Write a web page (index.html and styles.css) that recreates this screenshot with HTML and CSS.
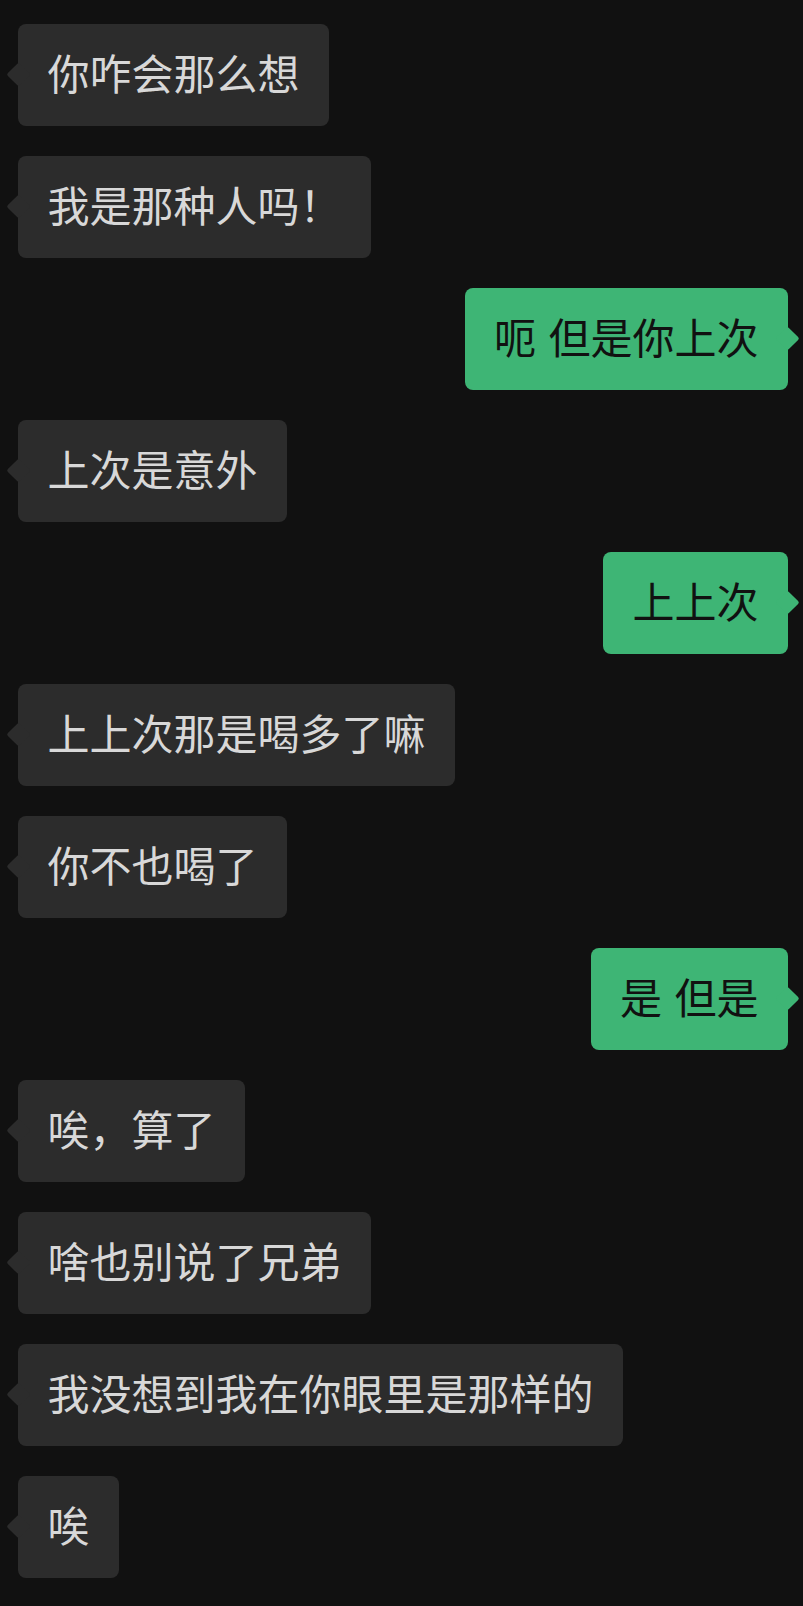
FILE: index.html
```html
<!DOCTYPE html>
<html lang="zh-CN">
<head>
    <meta charset="UTF-8">
    <meta name="viewport" content="width=device-width, initial-scale=1.0">
    <title>聊天</title>
    <link rel="stylesheet" href="styles.css">
</head>
<body>
    <div class="chat">
        <!-- each row is one message, .in = theirs, .out = mine -->
        <div class="row in"><div class="bubble">你咋会那么想</div></div>
        <div class="row in"><div class="bubble">我是那种人吗！</div></div>
        <div class="row out"><div class="bubble">呃 但是你上次</div></div>
        <div class="row in"><div class="bubble">上次是意外</div></div>
        <div class="row out"><div class="bubble">上上次</div></div>
        <div class="row in"><div class="bubble">上上次那是喝多了嘛</div></div>
        <div class="row in"><div class="bubble">你不也喝了</div></div>
        <div class="row out"><div class="bubble">是 但是</div></div>
        <div class="row in"><div class="bubble">唉，算了</div></div>
        <div class="row in"><div class="bubble">啥也别说了兄弟</div></div>
        <div class="row in"><div class="bubble">我没想到我在你眼里是那样的</div></div>
        <div class="row in"><div class="bubble">唉</div></div>
    </div>
</body>
</html>
```

FILE: styles.css
```css
body {
    margin: 0;
    padding: 0;
    background-color: #111111;
    font-family: "Noto Sans CJK SC", "Noto Sans", sans-serif;
}

.chat {
    display: flex;
    flex-direction: column;
    gap: 30px;
    padding: 24px 0 30px;
}

.row {
    display: flex;
}

.row.in {
    justify-content: flex-start;
    padding-left: 18px;
}

.row.out {
    justify-content: flex-end;
    padding-right: 15px;
}

/* message bubble */
.bubble {
    position: relative;
    font-size: 42px;
    line-height: 42px;
    word-spacing: 3px;
    padding: 27px 29.5px 33px;
    border-radius: 8px;
    white-space: pre;
}

.in .bubble {
    background-color: #2c2c2c;
    color: #d8d8d8;
}

.out .bubble {
    background-color: #3eb575;
    color: #111111;
}

/* little tail pointing to the speaker */
.bubble::before {
    content: "";
    position: absolute;
    top: 50%;
    width: 17px;
    height: 17px;
    margin-top: -9px;
    border-radius: 2px;
    transform: rotate(45deg);
    background-color: inherit;
}

.in .bubble::before {
    left: -8px;
}

.out .bubble::before {
    right: -8px;
}
```
